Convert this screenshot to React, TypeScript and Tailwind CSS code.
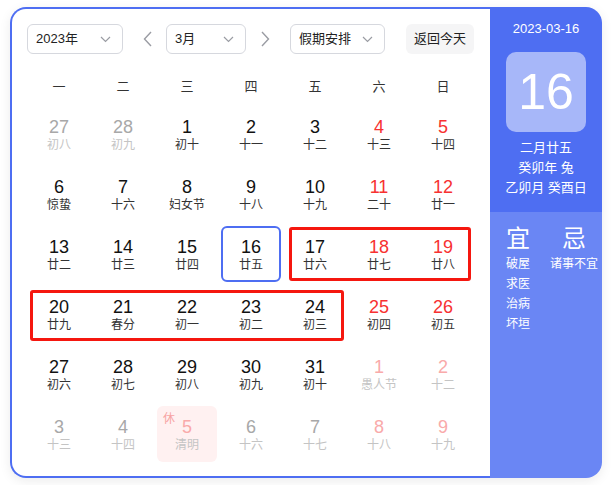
type Day = {
  n: number
  lunar: string
  kind: "normal" | "weekend" | "other" | "otherWeekend"
  holiday?: boolean
  selected?: boolean
}

const rows: Day[][] = [
  [
    { n: 27, lunar: "初八", kind: "other" },
    { n: 28, lunar: "初九", kind: "other" },
    { n: 1, lunar: "初十", kind: "normal" },
    { n: 2, lunar: "十一", kind: "normal" },
    { n: 3, lunar: "十二", kind: "normal" },
    { n: 4, lunar: "十三", kind: "weekend" },
    { n: 5, lunar: "十四", kind: "weekend" },
  ],
  [
    { n: 6, lunar: "惊蛰", kind: "normal" },
    { n: 7, lunar: "十六", kind: "normal" },
    { n: 8, lunar: "妇女节", kind: "normal" },
    { n: 9, lunar: "十八", kind: "normal" },
    { n: 10, lunar: "十九", kind: "normal" },
    { n: 11, lunar: "二十", kind: "weekend" },
    { n: 12, lunar: "廿一", kind: "weekend" },
  ],
  [
    { n: 13, lunar: "廿二", kind: "normal" },
    { n: 14, lunar: "廿三", kind: "normal" },
    { n: 15, lunar: "廿四", kind: "normal" },
    { n: 16, lunar: "廿五", kind: "normal", selected: true },
    { n: 17, lunar: "廿六", kind: "normal" },
    { n: 18, lunar: "廿七", kind: "weekend" },
    { n: 19, lunar: "廿八", kind: "weekend" },
  ],
  [
    { n: 20, lunar: "廿九", kind: "normal" },
    { n: 21, lunar: "春分", kind: "normal" },
    { n: 22, lunar: "初一", kind: "normal" },
    { n: 23, lunar: "初二", kind: "normal" },
    { n: 24, lunar: "初三", kind: "normal" },
    { n: 25, lunar: "初四", kind: "weekend" },
    { n: 26, lunar: "初五", kind: "weekend" },
  ],
  [
    { n: 27, lunar: "初六", kind: "normal" },
    { n: 28, lunar: "初七", kind: "normal" },
    { n: 29, lunar: "初八", kind: "normal" },
    { n: 30, lunar: "初九", kind: "normal" },
    { n: 31, lunar: "初十", kind: "normal" },
    { n: 1, lunar: "愚人节", kind: "otherWeekend" },
    { n: 2, lunar: "十二", kind: "otherWeekend" },
  ],
  [
    { n: 3, lunar: "十三", kind: "other" },
    { n: 4, lunar: "十四", kind: "other" },
    { n: 5, lunar: "清明", kind: "otherWeekend", holiday: true },
    { n: 6, lunar: "十六", kind: "other" },
    { n: 7, lunar: "十七", kind: "other" },
    { n: 8, lunar: "十八", kind: "otherWeekend" },
    { n: 9, lunar: "十九", kind: "otherWeekend" },
  ],
]

const weekdays = ["一", "二", "三", "四", "五", "六", "日"]

// grid placement classes, written out so tailwind picks them up
const colStart = ["col-start-1", "col-start-2", "col-start-3", "col-start-4", "col-start-5", "col-start-6", "col-start-7"]
const rowStart = ["row-start-1", "row-start-2", "row-start-3", "row-start-4", "row-start-5", "row-start-6"]

const numColor = {
  normal: "text-[#111]",
  weekend: "text-[#f73131]",
  other: "text-[#a8a8a8]",
  otherWeekend: "text-[#f9aaaa]",
}
const lunarColor = {
  normal: "text-[#333]",
  weekend: "text-[#333]",
  other: "text-[#c4c4c4]",
  otherWeekend: "text-[#c4c4c4]",
}

function Chevron() {
  return (
    <svg width="11" height="7" viewBox="0 0 11 7" fill="none">
      <polyline points="1,1 5.5,5.5 10,1" stroke="#9a9ca3" strokeWidth="1.2" />
    </svg>
  )
}

function Select({ label, width }: { label: string; width: string }) {
  return (
    <div
      className={`${width} h-[30px] flex items-center justify-between pl-[8px] pr-[11px] border border-[#d6d8de] rounded-[6px] text-[13px] text-[#222]`}
    >
      <span>{label}</span>
      <Chevron />
    </div>
  )
}

function Cell({ d, r, c }: { d: Day; r: number; c: number }) {
  return (
    <div className={`${rowStart[r]} ${colStart[c]} p-[2px]`}>
      <div
        className={`relative h-full rounded-[6px] border-2 flex flex-col items-center pt-[9px] ${
          d.selected ? "border-[#4e6ef2]" : "border-transparent"
        } ${d.holiday ? "bg-[#fff1f1]" : ""}`}
      >
        {d.holiday && (
          <span className="absolute left-[4px] top-[4px] text-[12px] leading-[14px] text-[#f7a3a3]">休</span>
        )}
        <span className={`text-[18px] leading-[20px] ${numColor[d.kind]}`}>{d.n}</span>
        <span className={`text-[12px] leading-[16px] ${lunarColor[d.kind]}`}>{d.lunar}</span>
      </div>
    </div>
  )
}

export default function App() {
  return (
    <div className="w-[611px] h-[485px] bg-white pl-[10px] pt-[7px] font-['Liberation_Sans','Noto_Sans_CJK_SC',sans-serif]">
      <div className="flex w-[592px] h-[471px] rounded-[16px] shadow-[0_3px_12px_rgba(0,0,0,0.08)]">
        {/* calendar side */}
        <div className="w-[480px] h-full border-2 border-r-0 border-[#4e6ef2] rounded-l-[16px] pl-[15px] pt-[15px]">
          <div className="flex items-center h-[30px]">
            <Select label="2023年" width="w-[96px]" />
            <svg className="ml-[20px] mr-[14px]" width="9" height="16" viewBox="0 0 9 16" fill="none">
              <polyline points="8,1 1.5,8 8,15" stroke="#9a9ca3" strokeWidth="1.4" />
            </svg>
            <Select label="3月" width="w-[80px]" />
            <svg className="ml-[15px] mr-[20px]" width="9" height="16" viewBox="0 0 9 16" fill="none">
              <polyline points="1,1 7.5,8 1,15" stroke="#9a9ca3" strokeWidth="1.4" />
            </svg>
            <Select label="假期安排" width="w-[95px]" />
            <button className="ml-[21px] w-[68px] h-[30px] rounded-[6px] bg-[#f5f5f6] text-[13px] text-[#222]">
              返回今天
            </button>
          </div>

          <div className="grid grid-cols-[repeat(7,64px)] mt-[16px] h-[34px] items-center">
            {weekdays.map((w) => (
              <div key={w} className="text-center text-[13px] text-[#333]">
                {w}
              </div>
            ))}
          </div>

          <div className="grid grid-cols-[repeat(7,64px)] grid-rows-[repeat(6,60px)]">
            {rows.map((row, r) => row.map((d, c) => <Cell key={`${r}-${c}`} d={d} r={r} c={c} />))}
            {/* highlighted ranges */}
            <div className="row-start-3 col-start-5 col-span-3 ml-[6px] mr-[4px] mt-[3px] mb-[3px] border-[3px] border-[#f5170f] rounded-[3px] pointer-events-none z-10" />
            <div className="row-start-4 col-start-1 col-span-5 ml-[3px] mr-[3px] mt-[6px] mb-[3px] border-[3px] border-[#f5170f] rounded-[3px] pointer-events-none z-10" />
          </div>
        </div>

        {/* day detail side */}
        <div className="w-[112px] h-full flex flex-col rounded-r-[16px] overflow-hidden text-white">
          <div className="h-[205px] bg-[#4e6ef2] flex flex-col items-center pt-[12px]">
            <div className="text-[13px] leading-[20px]">2023-03-16</div>
            <div className="mt-[13px] w-[80px] h-[80px] rounded-[10px] bg-white/50 flex items-center justify-center text-[50px] leading-none">
              16
            </div>
            <div className="mt-[6px] text-[13px] leading-[20px] text-center">
              <div>二月廿五</div>
              <div>癸卯年 兔</div>
              <div>乙卯月 癸酉日</div>
            </div>
          </div>
          <div className="flex-1 bg-[#6a86f4] flex pl-[16px] pt-[13px] gap-[20px]">
            <div className="flex flex-col items-center w-[24px]">
              <div className="text-[24px] leading-[28px]">宜</div>
              <div className="mt-[1px] text-[12px] leading-[20px] flex flex-col">
                <span>破屋</span>
                <span>求医</span>
                <span>治病</span>
                <span>坏垣</span>
              </div>
            </div>
            <div className="flex flex-col items-center w-[48px]">
              <div className="text-[24px] leading-[28px]">忌</div>
              <div className="mt-[1px] text-[12px] leading-[20px]">诸事不宜</div>
            </div>
          </div>
        </div>
      </div>
    </div>
  )
}
